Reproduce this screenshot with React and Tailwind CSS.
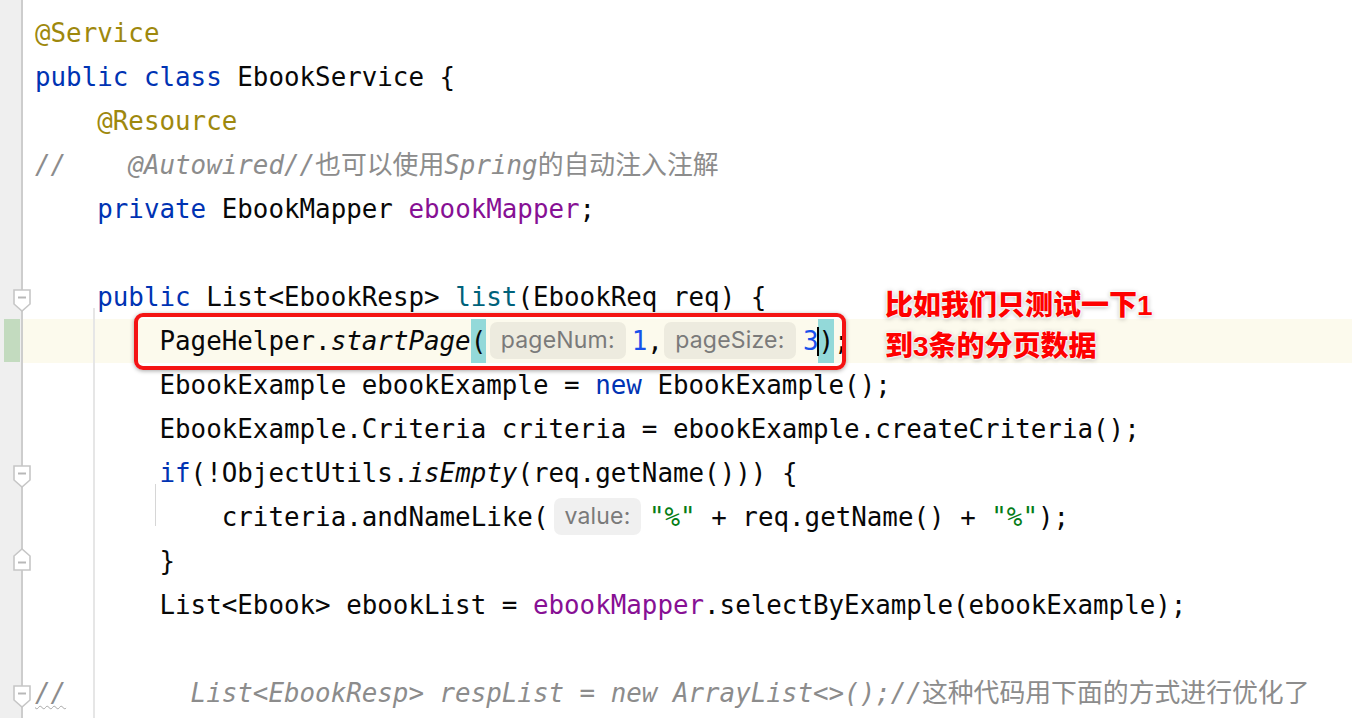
import React from "react";

const KW = "text-[#0033b3]";
const ANN = "text-[#9e880d]";
const FLD = "text-[#871094]";
const MDECL = "text-[#00627a]";
const STR = "text-[#067d17]";
const NUM = "text-[#1750eb]";
const CMT = "italic text-[#8c8c8c]";

function Row({ children, className = "" }) {
  return (
    <div className={"h-[44px] leading-[44px] whitespace-pre pl-[12px] " + className}>
      {children}
    </div>
  );
}

function Hint({ children, w, className = "" }) {
  return (
    <span className={"inline-flex align-top h-[44px] items-start pt-[3px] " + className}>
      <span
        className={
          "h-[37px] rounded-[7px] bg-[rgba(0,0,0,0.06)] flex items-center justify-center font-['Inter',sans-serif] not-italic text-[23px] tracking-[0.2px] leading-none text-[#7a7a7a] " +
          w
        }
      >
        {children}
      </span>
    </span>
  );
}

function Fold({ up = false }) {
  return (
    <svg width="18" height="23" viewBox="0 0 18 23">
      <path
        d={up ? "M1 22H17V8L9 1L1 8Z" : "M1 1H17V15L9 22L1 15Z"}
        fill="#ffffff"
        stroke="#c6c6c6"
        strokeWidth="1.6"
        strokeLinejoin="miter"
      />
      <path d={up ? "M5 14.5H13" : "M5 8.5H13"} stroke="#b8b8b8" strokeWidth="2" />
    </svg>
  );
}

export default function App() {
  const gutterRows = Array.from({ length: 16 }, (_, i) => i);
  return (
    <div className="w-[1352px] h-[718px] bg-white relative overflow-hidden flex font-['DejaVu_Sans_Mono','Noto_Sans_CJK_SC',monospace] text-[25.85px] text-[#080808]">
      {/* gutter */}
      <div className="w-[21px] shrink-0 bg-[#efefef] flex flex-col pt-[11px]">
        {gutterRows.map((i) => (
          <div key={i} className="h-[44px] pl-[4px]">
            {i === 7 ? <div className="w-[16px] h-[43px] bg-[#c3dbbf]" /> : null}
          </div>
        ))}
      </div>
      <div className="w-[2px] shrink-0 bg-[#cdcdcd]" />

      {/* code */}
      <div className="flex-1 flex flex-col pt-[11px] relative">
        {/* indent guides */}
        <div className="absolute left-[70px] top-[308px] bottom-0 w-[2px] bg-[#e6e6e6]" />
        <div className="absolute left-[132px] top-[484px] h-[42px] w-px bg-[#d6d6d6]" />

        <Row>
          <span className={ANN}>@Service</span>
        </Row>
        <Row>
          <span className={KW}>public class</span> EbookService {"{"}
        </Row>
        <Row>
          {"    "}
          <span className={ANN}>@Resource</span>
        </Row>
        <Row>
          <span className={CMT}>
            {"//    @Autowired//"}
            <span className="not-italic">也可以使用</span>Spring
            <span className="not-italic">的自动注入注解</span>
          </span>
        </Row>
        <Row>
          {"    "}
          <span className={KW}>private</span> EbookMapper <span className={FLD}>ebookMapper</span>;
        </Row>
        <Row>{" "}</Row>
        <Row>
          {"    "}
          <span className={KW}>public</span> List&lt;EbookResp&gt; <span className={MDECL}>list</span>(EbookReq req) {"{"}
        </Row>
        <Row className="bg-[#fcfaed]">
          {"        PageHelper."}
          <span className="italic">startPage</span>
          <span className="inline-block align-top h-[44px] bg-[#93d9d9]">(</span>
          <Hint w="w-[136px]" className="ml-[3.5px] mr-[6px]">
            pageNum:
          </Hint>
          <span className={NUM}>1</span>,
          <Hint w="w-[132px]" className="ml-[1px] mr-[7px]">
            pageSize:
          </Hint>
          <span className={NUM}>3</span>
          <span className="relative inline-block align-top h-[44px] bg-[#93d9d9]">
            )
            <span className="absolute left-[-1px] top-[8px] w-[2px] h-[29px] bg-black" />
          </span>
          ;
        </Row>
        <Row>
          {"        EbookExample ebookExample = "}
          <span className={KW}>new</span> EbookExample();
        </Row>
        <Row>{"        EbookExample.Criteria criteria = ebookExample.createCriteria();"}</Row>
        <Row>
          {"        "}
          <span className={KW}>if</span>(!ObjectUtils.<span className="italic">isEmpty</span>(req.getName())) {"{"}
        </Row>
        <Row>
          {"            criteria.andNameLike("}
          <Hint w="w-[87px]" className="ml-[5.5px] mr-[8px]">
            value:
          </Hint>
          <span className={STR}>"%"</span> + req.getName() + <span className={STR}>"%"</span>);
        </Row>
        <Row>{"        }"}</Row>
        <Row>
          {"        List<Ebook> ebookList = "}
          <span className={FLD}>ebookMapper</span>.selectByExample(ebookExample);
        </Row>
        <Row>{" "}</Row>
        <Row>
          <span className={CMT}>
            <span className="underline decoration-wavy decoration-[#a8a8a8] decoration-1 underline-offset-[3px]">//</span>
            {"        List<EbookResp> respList = new ArrayList<>();//"}
            <span className="not-italic">这种代码用下面的方式进行优化了</span>
          </span>
        </Row>
      </div>

      {/* fold markers */}
      <div className="absolute left-[13px] top-[289px]">
        <Fold />
      </div>
      <div className="absolute left-[13px] top-[465px]">
        <Fold />
      </div>
      <div className="absolute left-[13px] top-[548px]">
        <Fold up />
      </div>
      <div className="absolute left-[13px] top-[685px]">
        <Fold />
      </div>

      {/* red annotation box */}
      <div className="absolute left-[134px] top-[313px] w-[712px] h-[57px] border-[4px] border-[#f41414] rounded-[9px] shadow-[0_1px_4px_rgba(0,0,0,0.35)]" />

      {/* annotation text */}
      <div className="absolute left-[885px] top-[285px] font-['Liberation_Sans','Noto_Sans_CJK_SC',sans-serif] font-black text-[28px] leading-[41px] text-[#fe0000] [text-shadow:0_0_2px_#fff,0_0_2px_#fff,0_0_3px_#fff,0_0_3px_#fff,0_1px_5px_rgba(0,0,0,0.4)]">
        <div>比如我们只测试一下1</div>
        <div>到3条的分页数据</div>
      </div>
    </div>
  );
}
